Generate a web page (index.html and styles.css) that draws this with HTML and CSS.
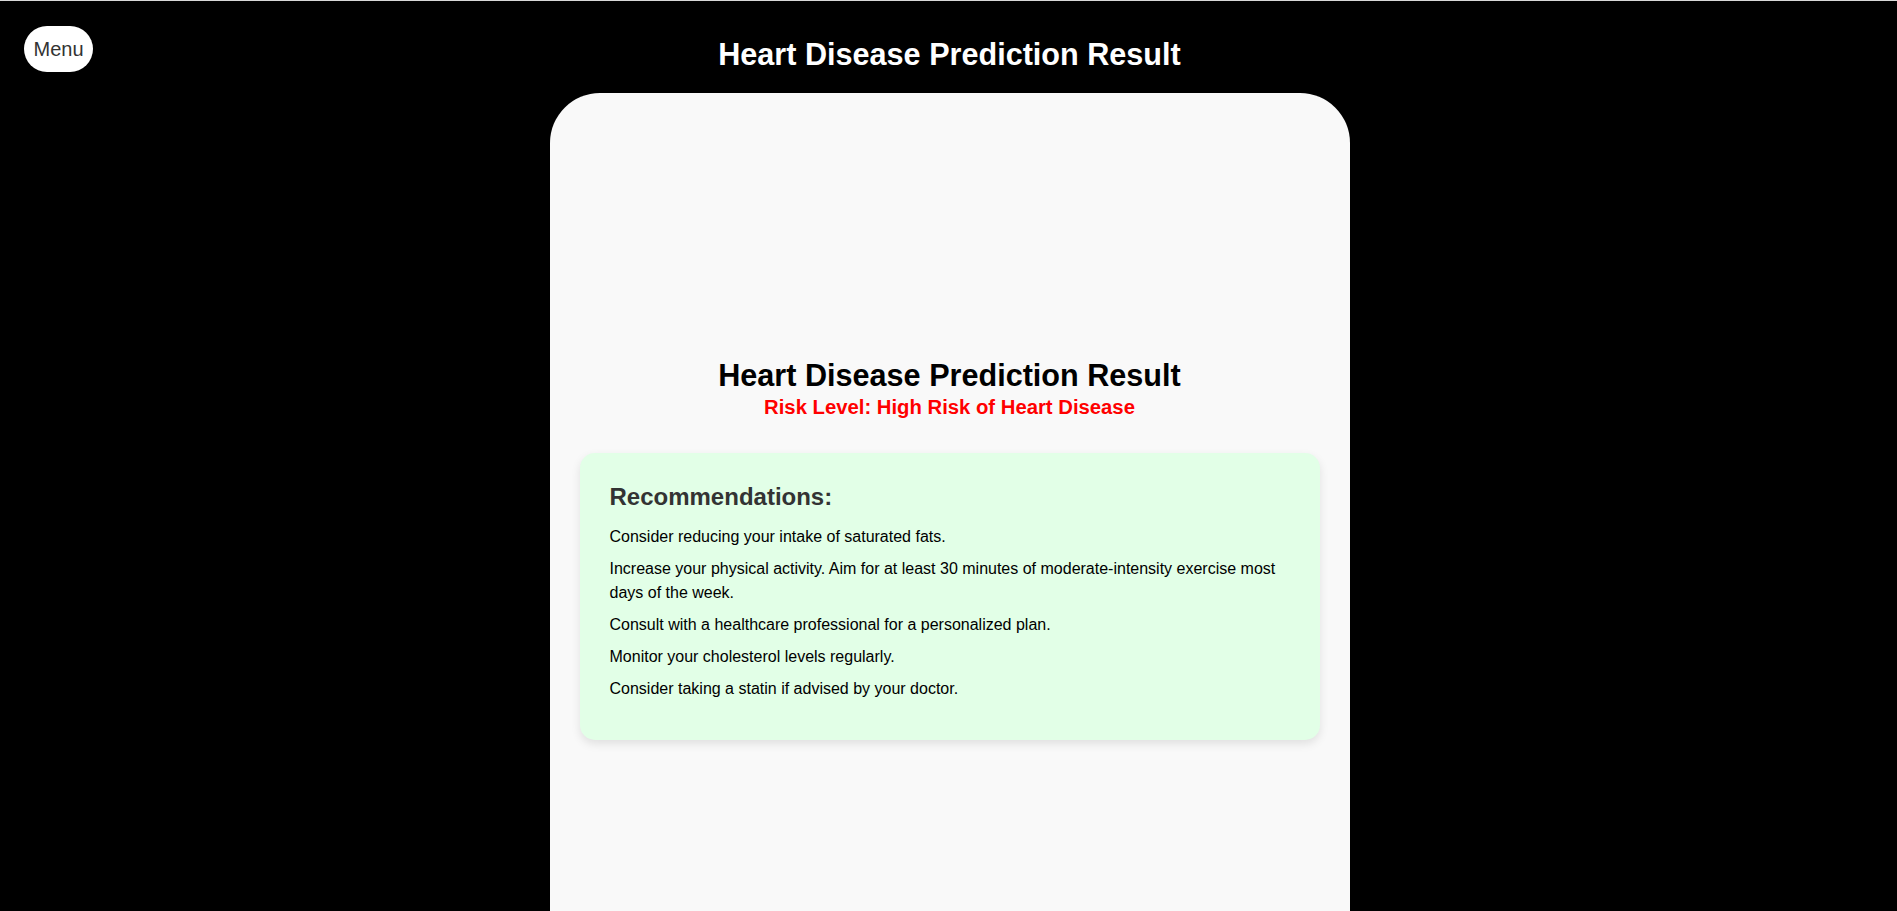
FILE: index.html
```html
<!DOCTYPE html>
<html lang="en">
<head>
<meta charset="utf-8">
<title>Heart Disease Prediction Result</title>
<link rel="stylesheet" href="styles.css">
</head>
<body>
<button class="menu-btn">Menu</button>
<header class="page-header">
  <h1 class="page-title">Heart Disease Prediction Result</h1>
</header>
<main class="result-card">
  <h1 class="result-title">Heart Disease Prediction Result</h1>
  <p class="risk-level">Risk Level: High Risk of Heart Disease</p>
  <section class="recommendations">
    <h2 class="rec-title">Recommendations:</h2>
    <ul class="rec-list">
      <li>Consider reducing your intake of saturated fats.</li>
      <li>Increase your physical activity. Aim for at least 30 minutes of moderate-intensity exercise most days of the week.</li>
      <li>Consult with a healthcare professional for a personalized plan.</li>
      <li>Monitor your cholesterol levels regularly.</li>
      <li>Consider taking a statin if advised by your doctor.</li>
    </ul>
  </section>
</main>
</body>
</html>
```
FILE: styles.css
```css
html {
  background: #000;
}
body {
  margin: 0;
  padding-left: 2px;
  background: #000;
  border-top: 1px solid #d8d8d8;
  font-family: "Liberation Sans", Arial, sans-serif;
  color: #000;
}
.menu-btn {
  position: absolute;
  top: 26px;
  left: 24px;
  width: 69px;
  height: 46px;
  border: none;
  border-radius: 23px;
  background: #fff;
  color: #333;
  font-family: "Liberation Sans", Arial, sans-serif;
  font-size: 20px;
  padding: 0;
  cursor: pointer;
}
.page-header {
  padding: 36px 0 22px;
  text-align: center;
}
.page-title {
  margin: 0;
  color: #fff;
  font-size: 30.6px;
  line-height: 34px;
  font-weight: bold;
}
.result-card {
  box-sizing: border-box;
  width: 800px;
  height: 911px;
  margin: 0 auto;
  padding: 0 30px;
  background: #f9f9f9;
  border-radius: 50px;
  display: flex;
  flex-direction: column;
  justify-content: center;
}
.result-title {
  margin: 0 0 4px;
  text-align: center;
  font-size: 30.6px;
  line-height: 34px;
  font-weight: bold;
  color: #000;
}
.risk-level {
  margin: 0 0 34px;
  text-align: center;
  color: #ff0000;
  font-size: 20.3px;
  line-height: 23px;
  font-weight: bold;
}
.recommendations {
  background: #e2ffe7;
  border-radius: 15px;
  padding: 30px 30px 31px;
  box-shadow: 0 4px 10px rgba(0, 0, 0, 0.1);
}
.rec-title {
  margin: 0 0 14px;
  font-size: 24px;
  line-height: 28px;
  color: #333;
}
.rec-list {
  list-style: none;
  margin: 0;
  padding: 0;
}
.rec-list li {
  font-size: 16px;
  line-height: 24px;
  margin-bottom: 8px;
}
```
